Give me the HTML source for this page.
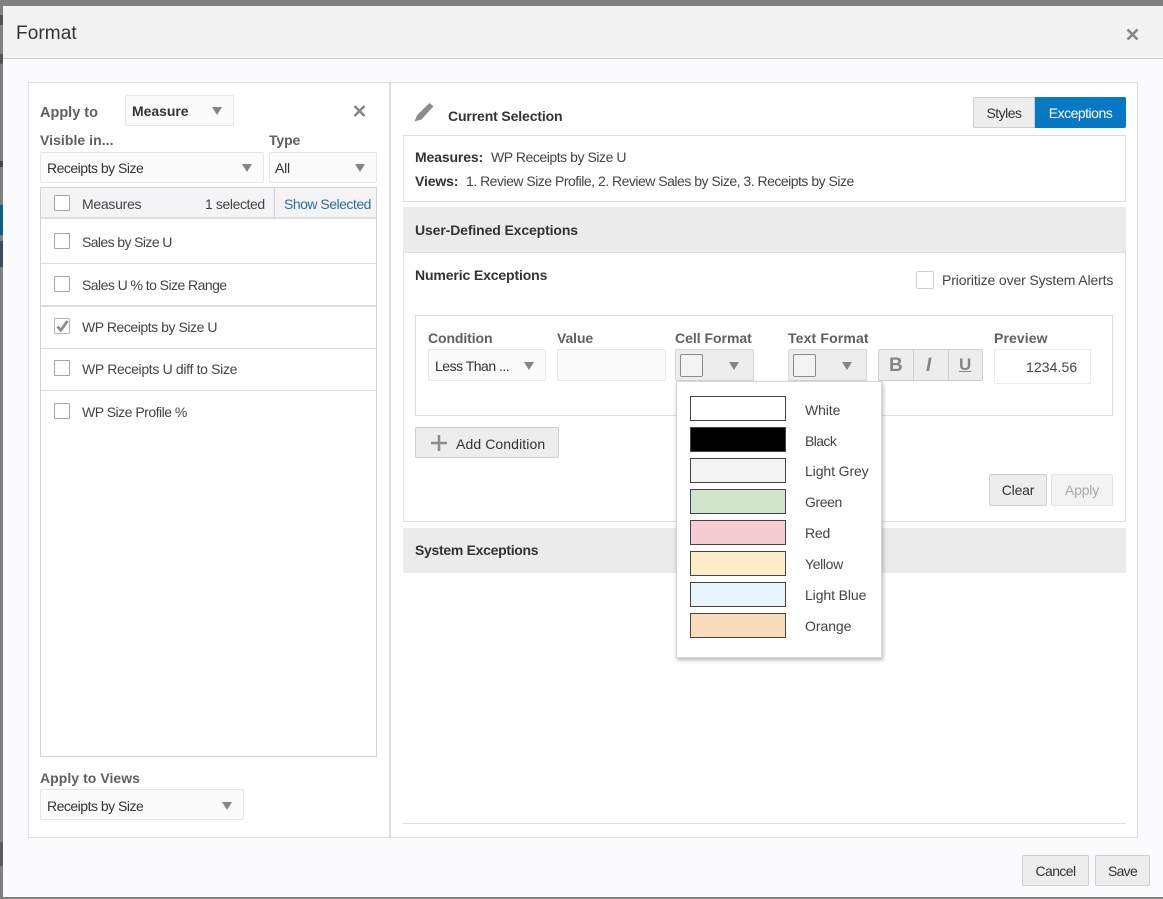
<!DOCTYPE html>
<html><head><meta charset="utf-8"><style>
html,body{margin:0;padding:0;width:1163px;height:899px;overflow:hidden;background:#808080}
body{position:relative;font-family:"Liberation Sans",sans-serif;font-size:14px;color:#333}
div,span.a{position:absolute;box-sizing:border-box}
.t{white-space:nowrap;line-height:18px;height:18px;letter-spacing:-.2px}
.b{font-weight:bold;color:#5f5f5f;letter-spacing:-.1px}
.k{font-weight:bold;color:#333;letter-spacing:-.13px}
.sel{background:#fbfbfc;border:1px solid #e6e6e8;border-radius:2px}
.arr{width:0;height:0;border-left:5.5px solid transparent;border-right:5.5px solid transparent;border-top:8px solid #858585}
.cb{width:16px;height:16px;background:#fff;border:1px solid #a6a6a6;border-radius:1px}
.line{background:#dcdcdc}
.btn{background:#ededee;border:1px solid #cfcfd1;border-radius:2px;text-align:center;line-height:30px;color:#333;letter-spacing:-.5px}
.sw{left:690px;width:96px;height:25px;border:1px solid #444}
.sl{left:805px}
</style></head><body>
<div style="left:0;top:15px;width:3px;height:10px;background:#555"></div>
<div style="left:0;top:54px;width:3px;height:10px;background:#555"></div>
<div style="left:0;top:161px;width:3px;height:6px;background:#444"></div>
<div style="left:0;top:205px;width:3px;height:30px;background:#0e5f85"></div>
<div style="left:0;top:241px;width:3px;height:26px;background:#3d4c5c"></div>
<div style="left:0;top:842px;width:3px;height:24px;background:#5c5c5c"></div>
<div style="left:3px;top:6px;width:1160px;height:891px;background:#fbfbfd"></div>
<div style="left:3px;top:6px;width:1160px;height:53px;background:#f2f2f3;border-bottom:1px solid #cdcdd0"></div>
<div class="t" style="left:16px;top:22px;font-size:19px;line-height:24px;height:24px;letter-spacing:.1px;color:#333">Format</div>
<svg style="position:absolute;left:1126px;top:28px" width="13" height="13" viewBox="0 0 13 13"><path d="M1.5 1.5l10 10M11.5 1.5l-10 10" stroke="#858585" stroke-width="2.6" fill="none"/></svg>

<div style="left:28px;top:82px;width:1110px;height:756px;background:#fff;border:1px solid #dedee0"></div>
<div style="left:389px;top:82px;width:2px;height:756px;background:#dedee0"></div>

<!-- left panel -->
<div class="t b" style="left:40px;top:104px;font-size:14.5px;letter-spacing:0">Apply to</div>
<div class="sel" style="left:125px;top:95px;width:109px;height:31px"></div>
<div class="t k" style="left:132px;top:102px;letter-spacing:-.05px">Measure</div>
<div class="arr" style="left:212px;top:107px"></div>
<svg style="position:absolute;left:353px;top:105px" width="13" height="12" viewBox="0 0 13 12"><path d="M1.5 1l10 10M11.5 1l-10 10" stroke="#858585" stroke-width="2.4" fill="none"/></svg>
<div class="t b" style="left:40px;top:131px;letter-spacing:.05px">Visible in...</div>
<div class="t b" style="left:269px;top:131px">Type</div>
<div class="sel" style="left:40px;top:152px;width:224px;height:31px"></div>
<div class="t" style="left:47px;top:159px;letter-spacing:-.5px">Receipts by Size</div>
<div class="arr" style="left:242px;top:164px"></div>
<div class="sel" style="left:269px;top:152px;width:108px;height:31px"></div>
<div class="t" style="left:275px;top:159px">All</div>
<div class="arr" style="left:355px;top:164px"></div>

<div style="left:40px;top:187px;width:337px;height:570px;background:#fff;border:1px solid #d2d2d4"></div>
<div style="left:41px;top:188px;width:335px;height:31px;background:#f4f4f6;border-bottom:2px solid #dedee0"></div>
<div style="left:274px;top:188px;width:1px;height:31px;background:#d5d5d7"></div>
<div class="cb" style="left:54px;top:195px"></div>
<div class="t" style="left:82px;top:195px;color:#444;letter-spacing:-.28px">Measures</div>
<div class="t" style="left:205px;top:195px;color:#444;letter-spacing:-.4px">1 selected</div>
<div class="t" style="left:284px;top:195px;color:#2a6d9e;letter-spacing:-.5px">Show Selected</div>

<div class="cb" style="left:54px;top:233px"></div>
<div class="t" style="left:82px;top:233px;color:#444;letter-spacing:-.6px">Sales by Size U</div>
<div class="line" style="left:41px;top:263px;width:335px;height:1px"></div>
<div class="cb" style="left:54px;top:276px"></div>
<div class="t" style="left:82px;top:276px;color:#444;letter-spacing:-.55px">Sales U % to Size Range</div>
<div class="line" style="left:41px;top:305px;width:335px;height:2px"></div>
<div class="cb" style="left:54px;top:318px;border-color:#b4b4b4"></div>
<svg style="position:absolute;left:54px;top:318px" width="17" height="17" viewBox="0 0 17 17"><path d="M3.5 8.5l3.3 3.8L13.5 3" stroke="#8c8c8c" stroke-width="2.8" fill="none"/></svg>
<div class="t" style="left:82px;top:318px;color:#444;letter-spacing:-.45px">WP Receipts by Size U</div>
<div class="line" style="left:41px;top:348px;width:335px;height:1px"></div>
<div class="cb" style="left:54px;top:360px"></div>
<div class="t" style="left:82px;top:360px;color:#444;letter-spacing:-.33px">WP Receipts U diff to Size</div>
<div class="line" style="left:41px;top:390px;width:335px;height:1px"></div>
<div class="cb" style="left:54px;top:403px"></div>
<div class="t" style="left:82px;top:403px;color:#444;letter-spacing:-.5px">WP Size Profile %</div>

<div class="t b" style="left:40px;top:769px;letter-spacing:.05px">Apply to Views</div>
<div class="sel" style="left:40px;top:789px;width:204px;height:31px"></div>
<div class="t" style="left:47px;top:797px;letter-spacing:-.5px">Receipts by Size</div>
<div class="arr" style="left:222px;top:802px"></div>

<!-- right panel -->
<svg style="position:absolute;left:412px;top:101px" width="24" height="22" viewBox="0 0 24 22"><path d="M17.5 2l4 3.4L9.5 18.5 2.5 20.5l2.6-6.4z" fill="#8c8c8c"/></svg>
<div class="t k" style="left:448px;top:107px">Current Selection</div>
<div class="btn" style="left:973px;top:97px;width:62px;height:31px;border-radius:2px 0 0 2px">Styles</div>
<div class="btn" style="left:1035px;top:97px;width:91px;height:31px;background:#0678c4;border-color:#0678c4;color:#fff;border-radius:0 2px 2px 0">Exceptions</div>

<div style="left:403px;top:135px;width:723px;height:67px;background:#fff;border:1px solid #dedee0"></div>
<div class="t k" style="left:415px;top:148px">Measures:</div>
<div class="t" style="left:491px;top:148px;color:#444;letter-spacing:-.45px">WP Receipts by Size U</div>
<div class="t k" style="left:415px;top:172px">Views:</div>
<div class="t" style="left:466px;top:172px;color:#444;letter-spacing:-.5px">1. Review Size Profile, 2. Review Sales by Size, 3. Receipts by Size</div>

<div style="left:403px;top:207px;width:723px;height:315px;background:#fff;border:1px solid #dedee0"></div>
<div style="left:403px;top:207px;width:723px;height:46px;background:#ebebeb;border-bottom:1px solid #dedee0"></div>
<div class="t k" style="left:415px;top:221px;letter-spacing:-.12px">User-Defined Exceptions</div>
<div class="t k" style="left:415px;top:266px">Numeric Exceptions</div>
<div class="cb" style="left:916px;top:271px;width:18px;height:18px;border-color:#d0d0d2;border-radius:2px"></div>
<div class="t" style="left:942px;top:271px;color:#444;letter-spacing:-.13px">Prioritize over System Alerts</div>

<div style="left:415px;top:315px;width:698px;height:101px;background:#fff;border:1px solid #dedee0"></div>
<div class="t b" style="left:428px;top:329px">Condition</div>
<div class="t b" style="left:557px;top:329px">Value</div>
<div class="t b" style="left:675px;top:329px;letter-spacing:-.02px">Cell Format</div>
<div class="t b" style="left:788px;top:329px;letter-spacing:.15px">Text Format</div>
<div class="t b" style="left:994px;top:329px;letter-spacing:.1px">Preview</div>
<div class="sel" style="left:428px;top:349px;width:118px;height:32px"></div>
<div class="t" style="left:435px;top:357px;letter-spacing:-.5px">Less Than ...</div>
<div class="arr" style="left:524px;top:362px"></div>
<div class="sel" style="left:557px;top:349px;width:109px;height:32px"></div>
<div class="sel" style="left:675px;top:349px;width:79px;height:32px;background:#ededee;border-color:#d8d8da"></div>
<div style="left:680px;top:354px;width:23px;height:23px;background:#f3f3f4;border:1px solid #8b8b8b;border-radius:2px"></div>
<div class="arr" style="left:729px;top:362px"></div>
<div class="sel" style="left:788px;top:349px;width:79px;height:32px;background:#ededee;border-color:#d8d8da"></div>
<div style="left:793px;top:354px;width:23px;height:23px;background:#f3f3f4;border:1px solid #8b8b8b;border-radius:2px"></div>
<div class="arr" style="left:842px;top:362px"></div>
<div class="sel" style="left:878px;top:349px;width:105px;height:32px;background:#ededee;border-color:#d0d0d2"></div>
<div style="left:913px;top:350px;width:1px;height:30px;background:#cfcfd1"></div>
<div style="left:948px;top:350px;width:1px;height:30px;background:#cfcfd1"></div>
<div class="t" style="left:889px;top:356px;font-size:19px;font-weight:bold;color:#858585;line-height:20px;height:20px;letter-spacing:0">B</div>
<div class="t" style="left:926px;top:356px;font-size:19px;font-weight:bold;font-style:italic;color:#858585;line-height:20px;height:20px;letter-spacing:0">I</div>
<div class="t" style="left:959px;top:355px;font-size:17px;font-weight:bold;text-decoration:underline;color:#858585;line-height:20px;height:20px;letter-spacing:0">U</div>
<div style="left:994px;top:349px;width:97px;height:35px;background:#fff;border:1px solid #ececee"></div>
<div class="t" style="left:1026px;top:358px;color:#444;letter-spacing:.1px">1234.56</div>

<div class="btn" style="left:415px;top:427px;width:144px;height:31px"></div>
<svg style="position:absolute;left:431px;top:435px" width="16" height="16" viewBox="0 0 16 16"><path d="M8 0v16M0 8h16" stroke="#8c8c8c" stroke-width="2.6"/></svg>
<div class="t" style="left:456px;top:435px;letter-spacing:.1px">Add Condition</div>
<div class="btn" style="left:989px;top:474px;width:58px;height:32px;letter-spacing:-.2px">Clear</div>
<div class="btn" style="left:1051px;top:474px;width:62px;height:32px;background:#f3f3f4;border-color:#e3e3e5;color:#a8a8a8;letter-spacing:-.2px">Apply</div>

<div style="left:403px;top:528px;width:723px;height:45px;background:#ebebeb"></div>
<div class="t k" style="left:415px;top:541px;letter-spacing:-.3px">System Exceptions</div>

<div style="left:403px;top:823px;width:723px;height:1px;background:#dedee0"></div>

<!-- popup -->
<div style="left:676px;top:381px;width:206px;height:277px;background:#fff;border:1px solid #d8d8d8;box-shadow:1px 2px 4px rgba(0,0,0,.3)"></div>
<div class="sw" style="top:396px;background:#fff"></div><div class="t sl" style="top:401px;color:#444;letter-spacing:-.1px">White</div>
<div class="sw" style="top:427px;background:#000"></div><div class="t sl" style="top:432px;color:#444;letter-spacing:-.6px">Black</div>
<div class="sw" style="top:458px;background:#f4f4f4"></div><div class="t sl" style="top:462px;color:#444;letter-spacing:-.1px">Light Grey</div>
<div class="sw" style="top:489px;background:#d0e5c9"></div><div class="t sl" style="top:493px;color:#444;letter-spacing:-.4px">Green</div>
<div class="sw" style="top:520px;background:#f6cdd3"></div><div class="t sl" style="top:524px;color:#444">Red</div>
<div class="sw" style="top:551px;background:#fdecc5"></div><div class="t sl" style="top:555px;color:#444;letter-spacing:-.35px">Yellow</div>
<div class="sw" style="top:582px;background:#e9f5fc"></div><div class="t sl" style="top:586px;color:#444;letter-spacing:-.1px">Light Blue</div>
<div class="sw" style="top:613px;background:#f9dcbc"></div><div class="t sl" style="top:617px;color:#444;letter-spacing:-.05px">Orange</div>

<div class="btn" style="left:1022px;top:855px;width:67px;height:31px;letter-spacing:-.6px">Cancel</div>
<div class="btn" style="left:1095px;top:855px;width:55px;height:31px;letter-spacing:-.7px">Save</div>
</body></html>
